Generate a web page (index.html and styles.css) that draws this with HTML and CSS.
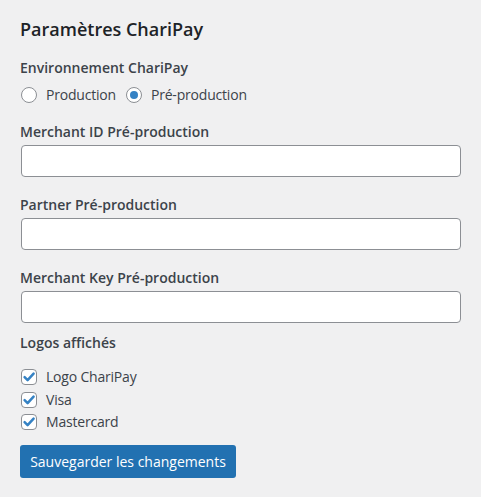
FILE: index.html
```html
<!DOCTYPE html>
<html lang="fr">
<head>
<meta charset="utf-8">
<title>Paramètres ChariPay</title>
<link rel="stylesheet" href="styles.css">
</head>
<body>
<form class="wrap">
  <h2 class="title">Paramètres ChariPay</h2>

  <div class="group env">
    <div class="label">Environnement ChariPay</div>
    <div class="radios">
      <label class="choice"><span class="radio"></span>Production</label>
      <label class="choice"><span class="radio checked"></span>Pré-production</label>
    </div>
  </div>

  <div class="group field">
    <label class="label">Merchant ID Pré-production</label>
    <input class="text" type="text">
  </div>

  <div class="group field">
    <label class="label">Partner Pré-production</label>
    <input class="text" type="text">
  </div>

  <div class="group field">
    <label class="label">Merchant Key Pré-production</label>
    <input class="text" type="text">
  </div>

  <div class="group logos">
    <div class="label">Logos affichés</div>
    <div class="checks">
      <label class="choice"><span class="check"><svg viewBox="0 0 16 16" width="16" height="16"><path d="M3.6 8.2 L6.6 11.2 L12.6 4.6" fill="none" stroke="#3582c4" stroke-width="2.5" stroke-linecap="round" stroke-linejoin="round"/></svg></span>Logo ChariPay</label>
      <label class="choice"><span class="check"><svg viewBox="0 0 16 16" width="16" height="16"><path d="M3.6 8.2 L6.6 11.2 L12.6 4.6" fill="none" stroke="#3582c4" stroke-width="2.5" stroke-linecap="round" stroke-linejoin="round"/></svg></span>Visa</label>
      <label class="choice"><span class="check"><svg viewBox="0 0 16 16" width="16" height="16"><path d="M3.6 8.2 L6.6 11.2 L12.6 4.6" fill="none" stroke="#3582c4" stroke-width="2.5" stroke-linecap="round" stroke-linejoin="round"/></svg></span>Mastercard</label>
    </div>
  </div>

  <button class="btn" type="button">Sauvegarder les changements</button>
</form>
</body>
</html>
```
FILE: styles.css
```css
html, body {
  margin: 0;
  padding: 0;
  background: #f0f0f1;
}
body {
  font-family: "Open Sans", "Noto Sans", sans-serif;
  color: #3c434a;
  font-size: 14px;
}
.wrap {
  padding: 17px 20px 0 20px;
  display: flex;
  flex-direction: column;
}
.title {
  margin: 0;
  font-size: 18px;
  line-height: 24px;
  font-weight: 600;
  color: #1d2327;
}
.label {
  display: block;
  font-size: 14px;
  line-height: 20px;
  font-weight: 600;
  color: #3c434a;
}
.env {
  margin-top: 17px;
}
.radios {
  display: flex;
  gap: 9px;
  margin-top: 7px;
}
.choice {
  display: flex;
  align-items: center;
  gap: 9px;
  line-height: 20px;
  font-size: 14px;
  letter-spacing: -0.2px;
}
.radio {
  width: 16px;
  height: 16px;
  box-sizing: border-box;
  border: 1px solid #8c8f94;
  border-radius: 50%;
  background: #fff;
  display: flex;
  align-items: center;
  justify-content: center;
  margin-left: 1px;
}
.radio.checked::before {
  content: "";
  width: 8px;
  height: 8px;
  border-radius: 50%;
  background: #3582c4;
}
.field {
  margin-top: 17px;
  display: flex;
  flex-direction: column;
}
.field + .field {
  margin-top: 18px;
}
.text {
  margin: 3px 0 0 1px;
  height: 32px;
  box-sizing: border-box;
  border: 1px solid #8c8f94;
  border-radius: 4px;
  background: #fff;
  width: 440px;
  padding: 0 8px;
}
.logos {
  margin-top: 10px;
}
.checks {
  display: flex;
  flex-direction: column;
  margin-top: 14px;
  gap: 2.5px;
}
.check {
  width: 16px;
  height: 16px;
  box-sizing: border-box;
  border: 1px solid #8c8f94;
  border-radius: 4px;
  background: #fff;
  display: flex;
  align-items: center;
  justify-content: center;
  margin-left: 1px;
}
.check svg {
  display: block;
  margin: -1px;
}
.btn {
  margin-top: 13px;
  align-self: flex-start;
  width: 216px;
  height: 33px;
  border: none;
  border-radius: 3px;
  background: #2271b1;
  color: #fff;
  font-family: inherit;
  font-size: 14px;
  padding: 0 10px;
}
```
